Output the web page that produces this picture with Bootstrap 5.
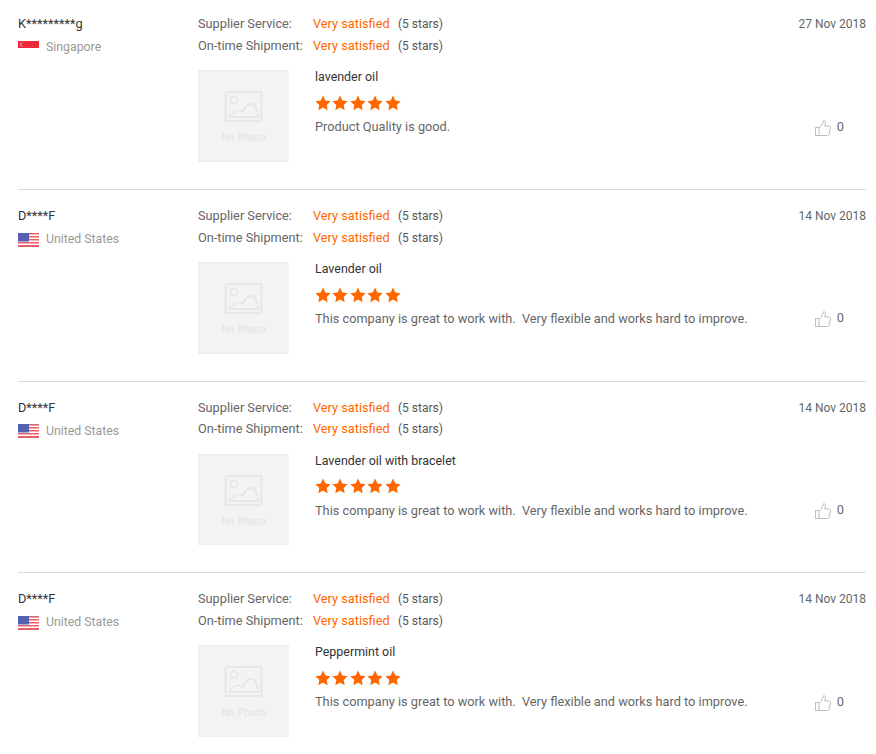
<!DOCTYPE html>
<html lang="en"><head><meta charset="utf-8"><title>Reviews</title>
<link rel="stylesheet" href="https://cdn.jsdelivr.net/npm/bootstrap@5.3.0/dist/css/bootstrap.min.css">
<style>
body{font-family:Roboto,"Liberation Sans",sans-serif;font-size:12.76px;color:#666;background:#fff;overflow:hidden}
.rv-list{padding:13px 10px 0 18px}
.rv-item{height:191.67px;border-bottom:1px solid #d9d9d9}
.rv-item+.rv-item{padding-top:15.1px}
.rv-item:first-child{height:176.9px}
.rv-buyer{width:180px;flex:none;line-height:21.67px}
.rv-name{color:#333}
.rv-country{color:#999;margin-top:2.3px;font-size:12.3px}
.rv-flag{width:21px;height:14px;flex:none;margin-right:7px;display:block}
.rv-line{line-height:21.67px;height:21.67px}
.rv-label{width:115px;flex:none}
.rv-sat{color:#f60;width:85px;flex:none}
.rv-stars-t{color:#555;font-size:12px}
.rv-date{color:#666;line-height:21.67px;font-size:12px}
.rv-prod{margin-top:13.7px}
.rv-photo{width:91px;height:91.67px;flex:none;background:#f3f3f3;border:1px solid #eee;border-right-color:#f3f3f3;margin-right:26px}
.rv-title{color:#333;line-height:14px;font-size:12.45px}
.rv-stars{margin-top:10.8px;height:16px;line-height:0;display:flex;gap:1.6px;margin-left:-.5px}
.rv-stars svg{width:16px;height:16px}
.rv-desc{margin-top:8.2px;color:#666;line-height:16px;white-space:pre-wrap}
.rv-like{position:absolute;right:22px;top:105.5px;color:#666;line-height:16px;gap:6px}
.rv-thumb{margin-top:1px}
</style></head><body>
<svg width="0" height="0" class="position-absolute"><defs>
<symbol id="st" viewBox="0 0 16 16"><path fill="#f60" d="M8 .6l2.3 4.9 5.3.7-3.9 3.7 1 5.3L8 12.6l-4.7 2.6 1-5.3L.4 6.2l5.3-.7z"/></symbol>
<symbol id="np" viewBox="0 0 92 92"><rect x="27.5" y="21.500" width="37" height="30" rx="1" fill="none" stroke="#e6e6e6" stroke-width="2"/><circle cx="36" cy="29.500" r="3.600" fill="none" stroke="#e6e6e6" stroke-width="1.600"/><path d="M31 47c5-7 9-8 14-5 4-7 8-10 11-8 3 3 5 8 6 13z" fill="none" stroke="#e6e6e6" stroke-width="1.800"/><text x="46" y="72" text-anchor="middle" font-family="Roboto,sans-serif" font-size="11" font-weight="500" fill="#e6e6e6">No Photo</text></symbol>
<symbol id="th" viewBox="0 0 16 16"><path fill="none" stroke="#bdbdbd" stroke-width="1" d="M.5 7.500h3.500v8H.5zM4 8l3-3 1.500-4.300c1.500-.3 2.200 1 1.900 2.300L9.700 6h4.300c1.200 0 1.700 1 1.400 2l-1.300 6.300c-.2.800-.7 1.200-1.500 1.200H4"/></symbol>
<symbol id="us" viewBox="0 0 21 14"><rect width="21" height="14" fill="#fff"/><path fill="#e8606a" d="M0 0h21v1.500H0zM0 3h21v1.500H0zM0 6h21v1.500H0zM0 9h21v1.500H0zM0 12h21v2H0z"/><rect width="11" height="8.500" fill="#5560b0"/></symbol>
<symbol id="sg" viewBox="0 0 21 14"><rect width="21" height="7" fill="#ed2939"/><rect y="7" width="21" height="7" fill="#fff"/><circle cx="4" cy="3.500" r="2" fill="#f8a0a8"/><circle cx="4.800" cy="3.500" r="1.800" fill="#ed2939"/></symbol>
</defs></svg>
<div class="rv-list">

<div class="rv-item d-flex">
<div class="rv-buyer"><div class="rv-name">K*********g</div><div class="rv-country d-flex align-items-center"><svg class="rv-flag"><use href="#sg"/></svg>Singapore</div></div>
<div class="flex-grow-1 position-relative">
<div class="d-flex align-items-baseline rv-line"><span class="rv-label">Supplier Service:</span><span class="rv-sat">Very satisfied</span><span class="rv-stars-t">(5 stars)</span><span class="rv-date ms-auto">27 Nov 2018</span></div>
<div class="d-flex align-items-baseline rv-line"><span class="rv-label">On-time Shipment:</span><span class="rv-sat">Very satisfied</span><span class="rv-stars-t">(5 stars)</span></div>
<div class="d-flex rv-prod"><svg class="rv-photo"><use href="#np"/></svg><div><div class="rv-title">lavender oil</div><div class="rv-stars"><svg><use href="#st"/></svg><svg><use href="#st"/></svg><svg><use href="#st"/></svg><svg><use href="#st"/></svg><svg><use href="#st"/></svg></div><div class="rv-desc">Product Quality is good.</div></div></div>
<div class="rv-like d-flex align-items-start"><svg width="16" height="16" class="rv-thumb"><use href="#th"/></svg><span>0</span></div>
</div></div>

<div class="rv-item d-flex">
<div class="rv-buyer"><div class="rv-name">D****F</div><div class="rv-country d-flex align-items-center"><svg class="rv-flag"><use href="#us"/></svg>United States</div></div>
<div class="flex-grow-1 position-relative">
<div class="d-flex align-items-baseline rv-line"><span class="rv-label">Supplier Service:</span><span class="rv-sat">Very satisfied</span><span class="rv-stars-t">(5 stars)</span><span class="rv-date ms-auto">14 Nov 2018</span></div>
<div class="d-flex align-items-baseline rv-line"><span class="rv-label">On-time Shipment:</span><span class="rv-sat">Very satisfied</span><span class="rv-stars-t">(5 stars)</span></div>
<div class="d-flex rv-prod"><svg class="rv-photo"><use href="#np"/></svg><div><div class="rv-title">Lavender oil</div><div class="rv-stars"><svg><use href="#st"/></svg><svg><use href="#st"/></svg><svg><use href="#st"/></svg><svg><use href="#st"/></svg><svg><use href="#st"/></svg></div><div class="rv-desc">This company is great to work with.  Very flexible and works hard to improve.</div></div></div>
<div class="rv-like d-flex align-items-start"><svg width="16" height="16" class="rv-thumb"><use href="#th"/></svg><span>0</span></div>
</div></div>

<div class="rv-item d-flex">
<div class="rv-buyer"><div class="rv-name">D****F</div><div class="rv-country d-flex align-items-center"><svg class="rv-flag"><use href="#us"/></svg>United States</div></div>
<div class="flex-grow-1 position-relative">
<div class="d-flex align-items-baseline rv-line"><span class="rv-label">Supplier Service:</span><span class="rv-sat">Very satisfied</span><span class="rv-stars-t">(5 stars)</span><span class="rv-date ms-auto">14 Nov 2018</span></div>
<div class="d-flex align-items-baseline rv-line"><span class="rv-label">On-time Shipment:</span><span class="rv-sat">Very satisfied</span><span class="rv-stars-t">(5 stars)</span></div>
<div class="d-flex rv-prod"><svg class="rv-photo"><use href="#np"/></svg><div><div class="rv-title">Lavender oil with bracelet</div><div class="rv-stars"><svg><use href="#st"/></svg><svg><use href="#st"/></svg><svg><use href="#st"/></svg><svg><use href="#st"/></svg><svg><use href="#st"/></svg></div><div class="rv-desc">This company is great to work with.  Very flexible and works hard to improve.</div></div></div>
<div class="rv-like d-flex align-items-start"><svg width="16" height="16" class="rv-thumb"><use href="#th"/></svg><span>0</span></div>
</div></div>

<div class="rv-item d-flex border-0">
<div class="rv-buyer"><div class="rv-name">D****F</div><div class="rv-country d-flex align-items-center"><svg class="rv-flag"><use href="#us"/></svg>United States</div></div>
<div class="flex-grow-1 position-relative">
<div class="d-flex align-items-baseline rv-line"><span class="rv-label">Supplier Service:</span><span class="rv-sat">Very satisfied</span><span class="rv-stars-t">(5 stars)</span><span class="rv-date ms-auto">14 Nov 2018</span></div>
<div class="d-flex align-items-baseline rv-line"><span class="rv-label">On-time Shipment:</span><span class="rv-sat">Very satisfied</span><span class="rv-stars-t">(5 stars)</span></div>
<div class="d-flex rv-prod"><svg class="rv-photo"><use href="#np"/></svg><div><div class="rv-title">Peppermint oil</div><div class="rv-stars"><svg><use href="#st"/></svg><svg><use href="#st"/></svg><svg><use href="#st"/></svg><svg><use href="#st"/></svg><svg><use href="#st"/></svg></div><div class="rv-desc">This company is great to work with.  Very flexible and works hard to improve.</div></div></div>
<div class="rv-like d-flex align-items-start"><svg width="16" height="16" class="rv-thumb"><use href="#th"/></svg><span>0</span></div>
</div></div>

</div>
<script src="https://cdn.jsdelivr.net/npm/bootstrap@5.3.0/dist/js/bootstrap.bundle.min.js"></script>
</body></html>
